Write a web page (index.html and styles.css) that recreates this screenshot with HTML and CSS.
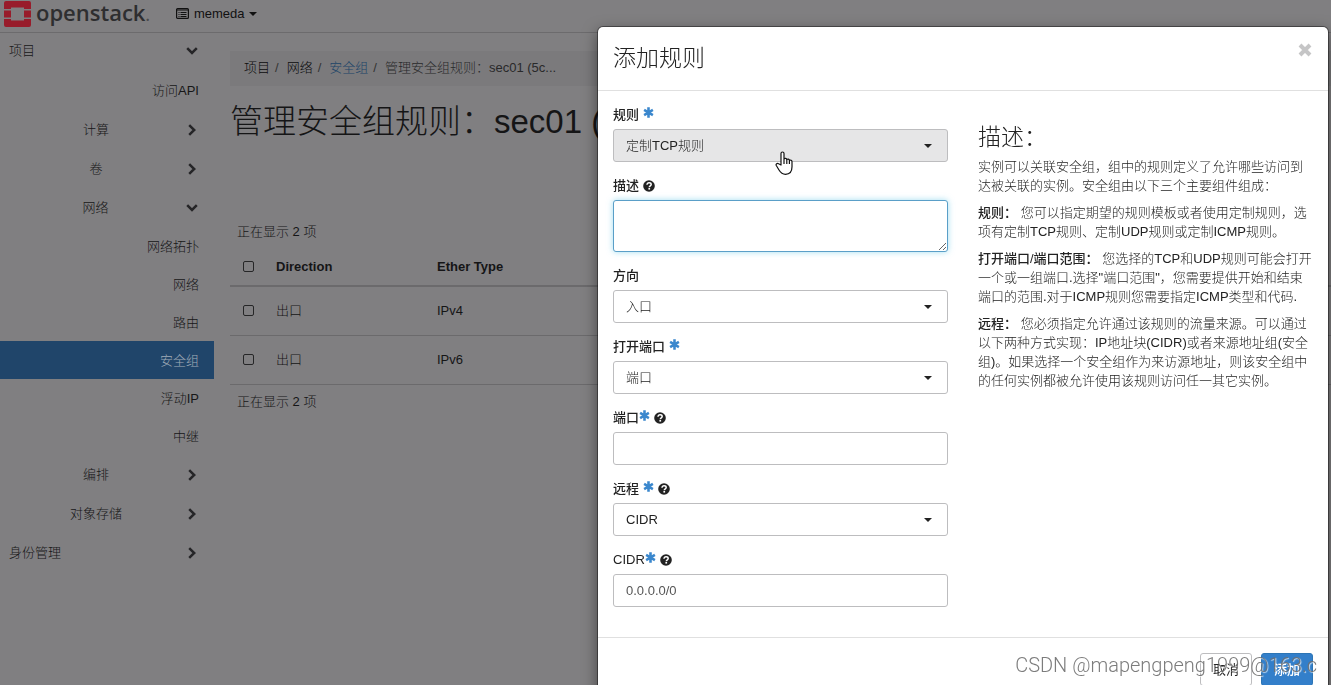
FILE: index.html
```html
<!DOCTYPE html>
<html lang="zh-CN">
<head>
<meta charset="utf-8">
<title>管理安全组规则 - OpenStack</title>
<link rel="stylesheet" href="styles.css">
</head>
<body>
<svg class="sprite" aria-hidden="true">
  <symbol id="right" viewBox="0 0 10 12"><path d="M2.2 1.2 7.2 6l-5 4.8" fill="none" stroke="currentColor" stroke-width="2.5"/></symbol>
  <symbol id="down" viewBox="0 0 12 10"><path d="M1.2 2.2 6 7l4.800-4.800" fill="none" stroke="currentColor" stroke-width="2.5"/></symbol>
  <symbol id="star" viewBox="0 0 12 12"><path d="M6 .4v11.200M1.200 3.200l9.600 5.600M10.800 3.200 1.200 8.800" fill="none" stroke="currentColor" stroke-width="2.800"/></symbol>
  <symbol id="help" viewBox="0 0 12 12"><circle cx="6" cy="6" r="5.800" fill="currentColor"/><path d="M4 4.800C4 3.400 4.900 2.800 6.100 2.800c1.200 0 2.100.7 2.100 1.700 0 1.300-1.900 1.400-1.900 2.700" fill="none" stroke="#fff" stroke-width="1.500"/><path d="M5.400 8h1.700v1.600H5.400z" fill="#fff"/></symbol>
</svg>
<div class="page">
  <header class="topbar">
    <a class="brand" href="#">
      <svg class="mark" viewBox="0 0 27 26" aria-hidden="true">
        <path d="M2 0h23a2 2 0 0 1 2 2v6h-7V6.500H7V8H0V2a2 2 0 0 1 2-2zM0 9.500h7v7H0zM20 9.500h7v7h-7zM0 18h7v1.500h13V18h7v6a2 2 0 0 1-2 2H2a2 2 0 0 1-2-2z" fill="#981c2b"/>
      </svg>
      <span>openstack<small>.</small></span>
    </a>
    <button class="project" type="button">
      <svg width="13" height="11" viewBox="0 0 13 11" aria-hidden="true"><rect x=".6" y=".6" width="11.800" height="9.800" rx="1" fill="none" stroke="currentColor" stroke-width="1.200"/><path d="M1 2h11M2.500 4.500h1M4.500 4.500h6M2.500 6.500h1M4.500 6.500h6M2.500 8.500h1M4.500 8.500h6" stroke="currentColor" stroke-width="1"/></svg>
      memeda
      <i class="caret"></i>
    </button>
  </header>
  <div class="columns">
    <nav class="sidebar">
      <a class="row top" href="#"><span>项目</span><svg class="chev wide"><use href="#down"/></svg></a>
      <a class="row leaf api" href="#">访问API</a>
      <a class="row group" href="#"><span>计算</span><svg class="chev"><use href="#right"/></svg></a>
      <a class="row group" href="#"><span>卷</span><svg class="chev"><use href="#right"/></svg></a>
      <a class="row group" href="#"><span>网络</span><svg class="chev wide"><use href="#down"/></svg></a>
      <div class="leaves">
        <a class="row leaf" href="#">网络拓扑</a>
        <a class="row leaf" href="#">网络</a>
        <a class="row leaf" href="#">路由</a>
        <a class="row leaf active" href="#">安全组</a>
        <a class="row leaf" href="#">浮动IP</a>
        <a class="row leaf" href="#">中继</a>
      </div>
      <a class="row group" href="#"><span>编排</span><svg class="chev"><use href="#right"/></svg></a>
      <a class="row group" href="#"><span>对象存储</span><svg class="chev"><use href="#right"/></svg></a>
      <a class="row top" href="#"><span>身份管理</span><svg class="chev"><use href="#right"/></svg></a>
    </nav>
    <main class="content">
      <ol class="crumbs">
        <li>项目</li><li>网络</li><li><a href="#">安全组</a></li><li class="current">管理安全组规则：sec01 (5c...</li>
      </ol>
      <h1>管理安全组规则：sec01 (5c...</h1>
      <p class="count">正在显示 2 项</p>
      <table class="rules">
        <thead>
          <tr><th class="pick"><input type="checkbox" aria-label="全选"></th><th class="dir">Direction</th><th>Ether Type</th></tr>
        </thead>
        <tbody>
          <tr><td><input type="checkbox" aria-label="选择 IPv4"></td><td>出口</td><td>IPv4</td></tr>
          <tr><td><input type="checkbox" aria-label="选择 IPv6"></td><td>出口</td><td>IPv6</td></tr>
        </tbody>
      </table>
      <p class="count">正在显示 2 项</p>
    </main>
  </div>
</div>

<div class="overlay">
  <section class="modal" role="dialog" aria-labelledby="modal-title">
    <header class="modal-head">
      <h2 id="modal-title">添加规则</h2>
      <button class="close" type="button" aria-label="关闭"><svg width="14" height="14" viewBox="0 0 14 14"><path d="m2 2 10 10M12 2 2 12" stroke="currentColor" stroke-width="4"/></svg></button>
    </header>
    <div class="modal-body">
      <form class="fields" id="rule-form">
        <div class="field">
          <label for="rule">规则 <svg class="star"><use href="#star"/></svg></label>
          <div class="select hover"><select id="rule"><option>定制TCP规则</option></select></div>
        </div>
        <div class="field">
          <label for="desc">描述 <svg class="help"><use href="#help"/></svg></label>
          <textarea id="desc"></textarea>
        </div>
        <div class="field">
          <label for="direction">方向</label>
          <div class="select"><select id="direction"><option>入口</option></select></div>
        </div>
        <div class="field">
          <label for="open">打开端口 <svg class="star"><use href="#star"/></svg></label>
          <div class="select"><select id="open"><option>端口</option></select></div>
        </div>
        <div class="field">
          <label class="tight" for="port">端口<svg class="star"><use href="#star"/></svg> <svg class="help"><use href="#help"/></svg></label>
          <input id="port" type="text">
        </div>
        <div class="field">
          <label for="remote">远程 <svg class="star"><use href="#star"/></svg> <svg class="help"><use href="#help"/></svg></label>
          <div class="select"><select id="remote"><option>CIDR</option></select></div>
        </div>
        <div class="field">
          <label class="tight" for="cidr">CIDR<svg class="star"><use href="#star"/></svg> <svg class="help"><use href="#help"/></svg></label>
          <input id="cidr" type="text" value="0.0.0.0/0">
        </div>
      </form>
      <div class="about">
        <h3>描述：</h3>
        <p>实例可以关联安全组，组中的规则定义了允许哪些访问到达被关联的实例。安全组由以下三个主要组件组成：</p>
        <p><b>规则：</b> 您可以指定期望的规则模板或者使用定制规则，选项有定制TCP规则、定制UDP规则或定制ICMP规则。</p>
        <p><b>打开端口/端口范围：</b> 您选择的TCP和UDP规则可能会打开一个或一组端口.选择"端口范围"，您需要提供开始和结束端口的范围.对于ICMP规则您需要指定ICMP类型和代码.</p>
        <p><b>远程：</b> 您必须指定允许通过该规则的流量来源。可以通过以下两种方式实现：IP地址块(CIDR)或者来源地址组(安全组)。如果选择一个安全组作为来访源地址，则该安全组中的任何实例都被允许使用该规则访问任一其它实例。</p>
      </div>
    </div>
    <footer class="modal-foot">
      <button class="btn" type="button">取消</button>
      <button class="btn primary" type="submit" form="rule-form">添加</button>
    </footer>
  </section>
  <svg class="pointer" width="19" height="25" viewBox="0 0 19 25" aria-hidden="true"><path d="M6 14V2.500a1.500 1.500 0 0 1 3 0V8c.8-1 2.500-.7 2.800.5.900-.8 2.300-.4 2.600.8 1.200-.6 2.600 0 2.600 1.500v5c0 4-2 7.500-6.500 7.500-3.500 0-5-1.800-6.500-4.300L1.300 14.500c-.8-1.500 1-2.800 2.300-1.700zM9 8v5M11.800 8.500V13M14.400 9.300V13" fill="#fff" stroke="#111" stroke-width="1.200" stroke-linejoin="round"/></svg>
  <div class="watermark">CSDN @mapengpeng1999@163.c</div>
</div>
</body>
</html>
```
FILE: styles.css
```css
* { box-sizing: border-box; }
body {
  margin: 0;
  font: 300 13px/19px "Liberation Sans", "Noto Sans CJK SC", sans-serif;
  color: #151516;
  background: #807f81;
}
h1, h2, h3, p, ol { margin: 0; padding: 0; font-weight: 300; }
a { color: inherit; text-decoration: none; }
button, input, select, textarea { font: inherit; color: inherit; }
.sprite { position: absolute; width: 0; height: 0; }
.page { height: 100vh; overflow: hidden; }

.topbar {
  display: flex;
  align-items: center;
  gap: 26px;
  height: 33px;
  padding: 0 4px 5px;
  border-bottom: 1px solid #6c6b6d;
}
.brand {
  display: flex;
  align-items: center;
  gap: 5px;
  font: 600 22px/26px "Open Sans", sans-serif;
  color: #2e2e30;
}
.brand span { padding-bottom: 4px; }
.brand small { font-size: 16px; line-height: 16px; color: #4c4c4e; }
.mark { width: 27px; height: 26px; }
.project {
  display: flex;
  align-items: center;
  gap: 5px;
  padding: 0;
  border: 0;
  background: none;
  color: #111;
}
.caret { border: 4px solid transparent; border-top-color: currentColor; border-bottom: 0; }

.columns { display: flex; gap: 16px; }
.sidebar { flex: 0 0 214px; margin-top: -2px; color: #171718; }
.row {
  display: flex;
  align-items: center;
  justify-content: space-between;
  height: 39px;
  padding: 0 17px 0 9px;
}
.group { padding-left: 5px; }
.group span { flex: 1; text-align: center; }
.leaf { height: 38px; padding-right: 15px; justify-content: flex-end; }
.api { height: 40px; }
.chev { width: 10px; height: 12px; color: #252527; }
.chev.wide { width: 12px; height: 10px; margin-right: -1px; }
.active { background: #20456a; color: #a0acb8; }

.content { flex: 1; min-width: 0; padding-top: 18px; }
.crumbs {
  display: flex;
  padding: 7px 14px 9px;
  background: #7b7a7c;
  list-style: none;
  white-space: nowrap;
  color: #0c0c0d;
}
.crumbs li + li::before { content: "/"; padding: 0 8px 0 5px; color: #333; }
.crumbs a { color: #1c4468; }
.crumbs .current { color: #29292a; }
h1 {
  overflow: hidden;
  padding: 16px 0 0;
  font-size: 33px;
  line-height: 40px;
  white-space: nowrap;
}
.count { padding: 7px; }
h1 + .count { padding-top: 80px; }
.rules { width: 100%; border-collapse: collapse; table-layout: fixed; }
.rules th, .rules td { padding: 0 7px; text-align: left; border-bottom: 1px solid #6b6a6c; }
.rules th { height: 38px; font-weight: 700; border-bottom-width: 2px; }
.rules td { height: 49px; }
.rules .pick { width: 39px; }
.rules .dir { width: 161px; }
.rules input {
  display: block;
  appearance: none;
  width: 11px;
  height: 11px;
  margin: 0 0 0 6px;
  border: 1px solid #262627;
  border-radius: 2px;
}

.overlay { position: fixed; inset: 0; overflow: hidden; padding: 27px 3px 0; }
.modal {
  width: 100%;
  max-width: 730px;
  margin-left: auto;
  background: #fff;
  color: #222;
  border-radius: 5px;
  box-shadow: 0 0 0 1px rgba(0, 0, 0, .4), 0 5px 15px rgba(0, 0, 0, .5);
}
.modal-head {
  display: flex;
  justify-content: space-between;
  align-items: flex-start;
  padding: 15px 15px 16px;
  border-bottom: 1px solid #e0e0e0;
}
h2 { font-size: 23px; line-height: 32px; }
.close { display: flex; margin: 0; padding: 1px; border: 0; background: none; color: #c5c5c6; }
.modal-body {
  display: grid;
  grid-template-columns: 1fr 1fr;
  gap: 30px;
  padding: 14px 15px 16px;
}
.field { margin-bottom: 14px; }
.field label { display: flex; align-items: center; gap: 4px; margin-bottom: 5px; font-weight: 500; }
.field label.tight { gap: 0; }
.tight .help { margin-left: 4px; }
.star { width: 11px; height: 11px; margin-bottom: 4px; color: #3a87cd; }
.help { width: 12px; height: 12px; color: #222; }
.select { position: relative; }
.select::after {
  content: "";
  position: absolute;
  top: 15px;
  right: 16px;
  border: 4px solid transparent;
  border-top-color: #222;
  border-bottom: 0;
  pointer-events: none;
}
.field select, .field input, .field textarea {
  display: block;
  width: 100%;
  height: 33px;
  padding: 0 12px;
  border: 1px solid #bdbdbf;
  border-radius: 3px;
  background: #fff;
  appearance: none;
  outline: 0;
}
.field input { color: #555; }
.field .hover select { background: #e6e6e7; }
.field textarea {
  height: 52px;
  border-color: #5a9fc8;
  box-shadow: 0 0 6px rgba(102, 200, 233, .6);
}
.about { padding-top: 19px; }
h3 { margin-bottom: 7px; font-size: 23px; line-height: 26px; }
.about p { margin-bottom: 8px; }
.about b { font-weight: 500; }
.modal-foot {
  display: flex;
  justify-content: flex-end;
  gap: 9px;
  padding: 15px;
  border-top: 1px solid #e0e0e0;
}
.btn {
  min-width: 52px;
  height: 33px;
  padding: 0 12px;
  border: 1px solid #bdbdbf;
  border-radius: 3px;
  background: #fff;
  font-weight: 400;
}
.btn.primary { border-color: #2d75b5; background: #337fca; color: #fff; font-weight: 500; }
.pointer { position: absolute; left: 775px; top: 151px; }
.watermark {
  position: absolute;
  right: 14px;
  bottom: 8px;
  font-family: Roboto, sans-serif;
  font-size: 20px;
  line-height: 24px;
  color: rgba(110, 110, 110, .9);
  text-shadow: 1px 1px 1px rgba(255, 255, 255, .8);
}
```
